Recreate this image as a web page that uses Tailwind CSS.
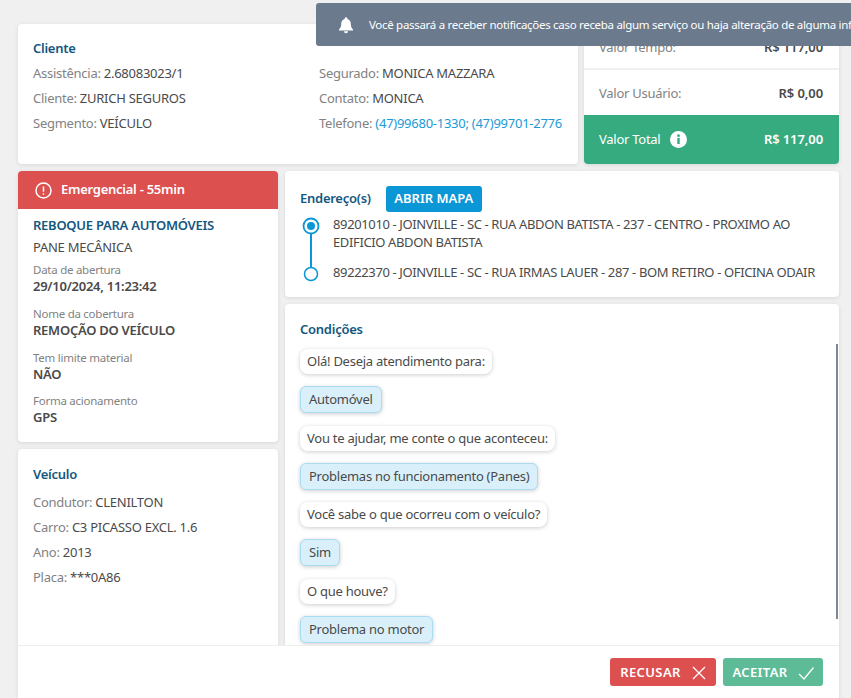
<!DOCTYPE html>
<html lang="pt"><head><meta charset="utf-8">
<script src="https://cdn.jsdelivr.net/npm/@tailwindcss/browser@4"></script>
</head>
<body class="m-0 bg-[#f0f0f0] font-['Noto_Sans',sans-serif] text-[13px] tracking-[-0.26px] text-[#4a4a4a]">
<div class="relative w-[851px] h-[698px] overflow-hidden">
  <!-- notification -->
  <div class="absolute left-[316px] top-[3px] z-30 flex h-[43px] w-[535px] items-center overflow-hidden rounded-l-[3px] bg-[#6c7a8d] pl-[21px] text-white">
    <svg class="mr-[14px] h-[18px] w-[18px] shrink-0" viewBox="0 0 24 24" fill="currentColor"><path d="M12 1.500a1.800 1.800 0 0 0-1.800 1.800v.6C7.200 4.700 5.600 7.400 5.600 10.400c0 4-1.200 5.700-3 7.600v1.200h18.800v-1.200c-1.800-1.900-3-3.600-3-7.600 0-3-1.600-5.700-4.600-6.500v-.6A1.800 1.800 0 0 0 12 1.500zM9.300 20.400a2.700 2.700 0 0 0 5.400 0z"/></svg>
    <span class="whitespace-nowrap text-[11.500px] tracking-[-0.3px]">Você passará a receber notificações caso receba algum serviço ou haja alteração de alguma informação</span>
  </div>
  <div class="flex flex-col gap-[7px] pl-[18px] pr-[12px] pt-[24px]">
    <!-- top row -->
    <div class="flex h-[140px] gap-[6px]">
      <section class="flex w-[560px] rounded-[4px] bg-white pl-[15px] pt-[15px] shadow-[0_1px_4px_rgba(0,0,0,0.1)]">
        <div class="w-[286px]">
          <h2 class="mb-[3px] h-[19px] font-semibold leading-[19px] text-[#14577f]">Cliente</h2>
          <p class="h-[25px] leading-[25px]"><span class="text-[#828282]">Assistência:</span> 2.68083023/1</p>
          <p class="h-[25px] leading-[25px]"><span class="text-[#828282]">Cliente:</span> ZURICH SEGUROS</p>
          <p class="h-[25px] leading-[25px]"><span class="text-[#828282]">Segmento:</span> VEÍCULO</p>
        </div>
        <div class="pt-[22px]">
          <p class="h-[25px] leading-[25px]"><span class="text-[#828282]">Segurado:</span> MONICA MAZZARA</p>
          <p class="h-[25px] leading-[25px]"><span class="text-[#828282]">Contato:</span> MONICA</p>
          <p class="h-[25px] leading-[25px]"><span class="text-[#828282]">Telefone:</span> <span class="text-[#1a9ad6]">(47)99680-1330; (47)99701-2776</span></p>
        </div>
      </section>
      <section class="flex w-[255px] flex-col overflow-hidden rounded-[4px] bg-white shadow-[0_1px_4px_rgba(0,0,0,0.1)]">
        <div class="flex h-[46px] items-end justify-between border-b-2 border-[#f0f0f0] pl-[15px] pr-[16px] pb-[11px]"><span class="text-[#828282]">Valor Tempo:</span><b class="font-semibold tracking-[-0.1px]">R$ 117,00</b></div>
        <div class="flex h-[45px] items-center justify-between pl-[15px] pr-[16px] pt-[2px]"><span class="text-[#828282]">Valor Usuário:</span><b class="font-semibold tracking-[-0.1px]">R$ 0,00</b></div>
        <div class="flex h-[49px] items-center justify-between bg-[#36ab80] pl-[15px] pr-[16px] text-white">
          <span class="flex items-center gap-[10px]">Valor Total
            <svg class="h-[17px] w-[17px]" viewBox="0 0 17 17"><circle cx="8.500" cy="8.500" r="8.500" fill="#fff"/><rect x="7.300" y="7" width="2.400" height="6" fill="#36ab80"/><circle cx="8.500" cy="4.700" r="1.400" fill="#36ab80"/></svg>
          </span><b class="font-semibold tracking-[-0.1px]">R$ 117,00</b></div>
      </section>
    </div>
    <!-- lower row -->
    <div class="flex h-[600px] gap-[7px]">
      <div class="flex w-[260px] shrink-0 flex-col gap-[7px]">
        <section class="h-[271px] overflow-hidden rounded-[4px] bg-white shadow-[0_1px_4px_rgba(0,0,0,0.1)]">
          <div class="flex h-[38px] items-center gap-[9px] bg-[#dc5050] pl-[17px] font-semibold text-white">
            <svg class="h-[17px] w-[17px]" viewBox="0 0 17 17" fill="none" stroke="#fff" stroke-width="1.500"><circle cx="8.500" cy="8.500" r="7.500"/><path d="M8.500 4.500v5.200M8.500 11.300v1.500"/></svg>
            Emergencial - 55min</div>
          <div class="px-[15px] pt-[7px]">
            <h3 class="h-[18px] font-semibold uppercase leading-[18px] text-[#14577f]">Reboque para automóveis</h3>
            <p class="mt-[4px] h-[18px] leading-[18px]">PANE MECÂNICA</p>
            <p class="mt-[6px] h-[15px] text-[11.500px] leading-[15px] text-[#828282]">Data de abertura</p>
            <p class="h-[18px] font-semibold leading-[18px]">29/10/2024, 11:23:42</p>
            <p class="mt-[11px] h-[15px] text-[11.500px] leading-[15px] text-[#828282]">Nome da cobertura</p>
            <p class="h-[18px] font-semibold leading-[18px]">REMOÇÃO DO VEÍCULO</p>
            <p class="mt-[11px] h-[15px] text-[11.500px] leading-[15px] text-[#828282]">Tem limite material</p>
            <p class="h-[18px] font-semibold leading-[18px]">NÃO</p>
            <p class="mt-[10px] h-[15px] text-[11.500px] leading-[15px] text-[#828282]">Forma acionamento</p>
            <p class="h-[18px] font-semibold leading-[18px]">GPS</p>
          </div>
        </section>
        <section class="flex-1 rounded-[4px] bg-white pl-[15px] pt-[16px] shadow-[0_1px_4px_rgba(0,0,0,0.1)]">
          <h2 class="mb-[6px] h-[19px] font-semibold leading-[19px] text-[#14577f]">Veículo</h2>
          <p class="h-[25px] leading-[25px]"><span class="text-[#828282]">Condutor:</span> CLENILTON</p>
          <p class="h-[25px] leading-[25px]"><span class="text-[#828282]">Carro:</span> C3 PICASSO EXCL. 1.6</p>
          <p class="h-[25px] leading-[25px]"><span class="text-[#828282]">Ano:</span> 2013</p>
          <p class="h-[25px] leading-[25px]"><span class="text-[#828282]">Placa:</span> ***0A86</p>
        </section>
      </div>
      <div class="flex w-[554px] flex-col gap-[7px]">
        <section class="h-[126px] rounded-[4px] bg-white pl-[15px] pt-[15px] shadow-[0_1px_4px_rgba(0,0,0,0.1)]">
          <div class="flex items-center gap-[15px]">
            <h2 class="font-semibold text-[#14577f]">Endereço(s)</h2>
            <span class="flex h-[26px] w-[96px] items-center justify-center rounded-[3px] bg-[#0b96d6] font-semibold tracking-normal text-white">ABRIR MAPA</span>
          </div>
          <div class="mt-[3px] flex">
            <svg class="ml-[1.500px] mr-[13.500px] mt-[2px] h-[66px] w-[18px] shrink-0" viewBox="0 0 18 66" fill="none" stroke="#0b96d6"><circle cx="9" cy="9" r="7.500" stroke-width="1.800"/><circle cx="9" cy="9" r="4" fill="#0b96d6" stroke="none"/><path d="M9 17v34" stroke-width="2"/><circle cx="9" cy="57" r="6.500" stroke-width="1.500"/></svg>
            <div class="w-[500px] leading-[18px] tracking-[-0.37px]">
              <p>89201010 - JOINVILLE - SC - RUA ABDON BATISTA - 237 - CENTRO - PROXIMO AO EDIFICIO ABDON BATISTA</p>
              <p class="mt-[12px]">89222370 - JOINVILLE - SC - RUA IRMAS LAUER - 287 - BOM RETIRO - OFICINA ODAIR</p>
            </div>
          </div>
        </section>
        <section class="relative flex-1 rounded-[4px] bg-white pl-[15px] pt-[16px] shadow-[0_1px_4px_rgba(0,0,0,0.1)]">
          <h2 class="h-[18px] font-semibold leading-[18px] text-[#14577f]">Condições</h2>
          <div class="absolute right-[1px] top-[40px] h-[275px] w-[2px] bg-[#7f8794]"></div>
          <div class="mt-[11px] flex flex-col items-start gap-[12.250px]">
            <div class="h-[25px] rounded-[8px] bg-white px-[7px] leading-[25px] shadow-[0_1px_4px_rgba(0,0,0,0.2)]">Olá! Deseja atendimento para:</div>
            <div class="h-[27px] rounded-[6px] border border-[#a9dcf3] bg-[#d9f0fa] px-[8px] leading-[25px] shadow-[0_1px_4px_rgba(0,0,0,0.2)]">Automóvel</div>
            <div class="h-[25px] rounded-[8px] bg-white px-[7px] leading-[25px] shadow-[0_1px_4px_rgba(0,0,0,0.2)]">Vou te ajudar, me conte o que aconteceu:</div>
            <div class="h-[27px] rounded-[6px] border border-[#a9dcf3] bg-[#d9f0fa] px-[8px] leading-[25px] shadow-[0_1px_4px_rgba(0,0,0,0.2)]">Problemas no funcionamento (Panes)</div>
            <div class="h-[25px] rounded-[8px] bg-white px-[7px] leading-[25px] shadow-[0_1px_4px_rgba(0,0,0,0.2)]">Você sabe o que ocorreu com o veículo?</div>
            <div class="h-[27px] rounded-[6px] border border-[#a9dcf3] bg-[#d9f0fa] px-[8px] leading-[25px] shadow-[0_1px_4px_rgba(0,0,0,0.2)]">Sim</div>
            <div class="h-[25px] rounded-[8px] bg-white px-[7px] leading-[25px] shadow-[0_1px_4px_rgba(0,0,0,0.2)]">O que houve?</div>
            <div class="h-[27px] rounded-[6px] border border-[#a9dcf3] bg-[#d9f0fa] px-[8px] leading-[25px] shadow-[0_1px_4px_rgba(0,0,0,0.2)]">Problema no motor</div>
          </div>
        </section>
      </div>
    </div>
  </div>
  <!-- footer -->
  <div class="absolute bottom-0 left-[18px] z-20 flex h-[53px] w-[821px] items-start justify-end gap-[7px] border-t border-[#eeeeee] bg-white pr-[16px] pt-[12px]">
    <span class="flex h-[28px] w-[106px] items-center justify-center gap-[11px] rounded-[3px] bg-[#dc5050] pt-[1px] font-semibold tracking-[0.4px] text-white">RECUSAR
      <svg class="h-[14px] w-[14px]" viewBox="0 0 14 14" fill="none" stroke="#fff" stroke-width="1.300"><path d="M1 1l12 12M13 1L1 13"/></svg></span>
    <span class="flex h-[28px] w-[100px] items-center justify-center gap-[10px] rounded-[3px] bg-[#5dbb98] pt-[1px] font-semibold tracking-[0.4px] text-white">ACEITAR
      <svg class="h-[14px] w-[16px]" viewBox="0 0 16 14" fill="none" stroke="#fff" stroke-width="1.300"><path d="M1 8l5 5L15.500 1.500"/></svg></span>
  </div>
</div>
</body></html>
